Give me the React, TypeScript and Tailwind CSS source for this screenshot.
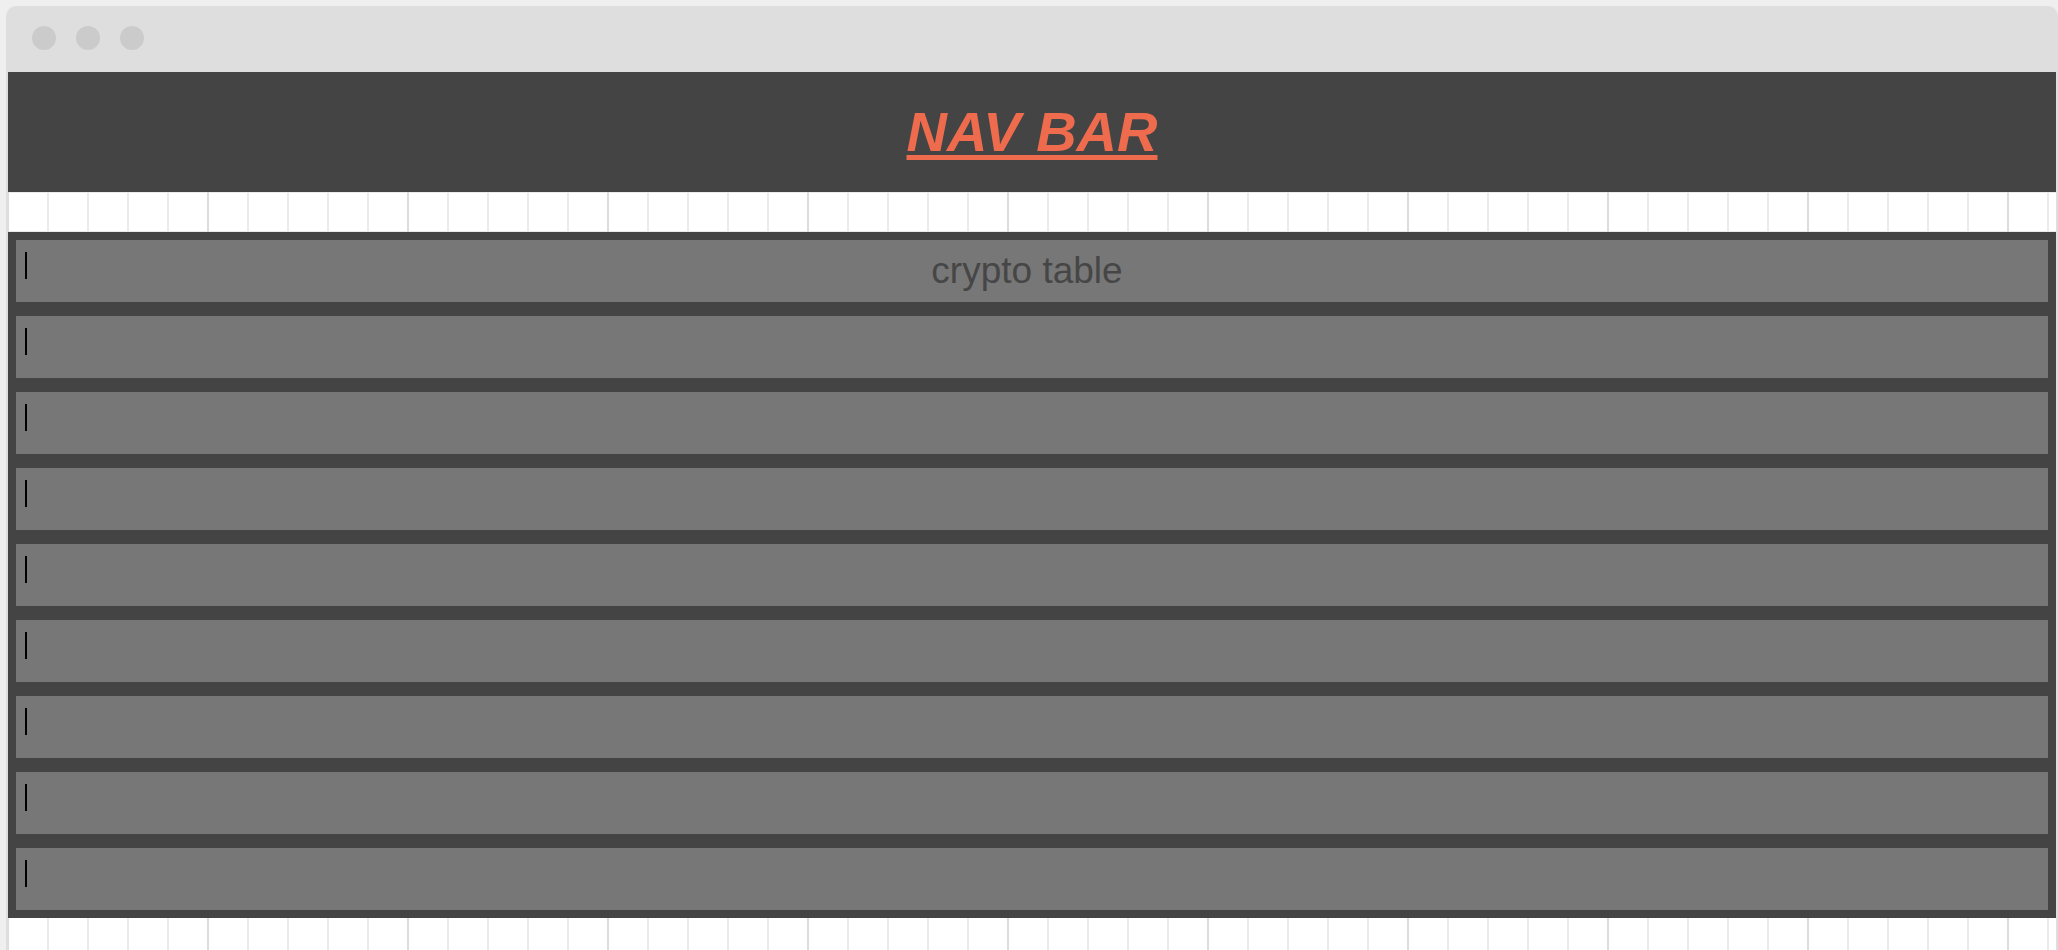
import React from 'react';

const ROWS = 9;

const App: React.FC = () => {
  const rows = Array.from({ length: ROWS }, (_, i) => i);

  return (
    <div className="min-h-screen bg-[#efefef] pl-[6px] pt-[6px] font-['Liberation_Sans',Arial,sans-serif]">
      {/* Browser window */}
      <div className="rounded-t-[10px] bg-[#dedede] px-[2px]">
        {/* Title bar */}
        <div className="flex h-[66px] items-start gap-[20px] pl-[24px] pt-[20px]">
          <span className="h-[24px] w-[24px] rounded-full bg-[#cbcbcb]" />
          <span className="h-[24px] w-[24px] rounded-full bg-[#cbcbcb]" />
          <span className="h-[24px] w-[24px] rounded-full bg-[#cbcbcb]" />
        </div>

        {/* Nav bar */}
        <nav className="flex h-[120px] items-center justify-center bg-[#444444]">
          <a
            href="#"
            className="text-[56px] font-bold italic text-[#ee6c4d] underline decoration-[5px] underline-offset-[4px]"
          >
            NAV BAR
          </a>
        </nav>

        {/* Page with grid background */}
        <main className="bg-white bg-[image:linear-gradient(to_right,#dcdcdc_2px,transparent_2px),linear-gradient(to_right,#ebebeb_2px,transparent_2px),linear-gradient(to_bottom,#ebebeb_2px,transparent_2px)] bg-size-[200px_100%,40px_100%,100%_40px] bg-position-[199px_0,39px_0,0_39px] pt-[40px] pb-[60px]">
          <div className="flex flex-col gap-[14px] bg-[#444444] p-[8px]">
            {rows.map((i) => (
              <div key={i} className="flex h-[62px] bg-[#777777]">
                <span className="ml-[9px] mt-[12px] h-[27px] w-[2px] bg-black" />
                <div className="flex flex-1 items-center justify-center pr-[21px] text-[37px] text-[#464646]">
                  {i === 0 ? 'crypto table' : ''}
                </div>
              </div>
            ))}
          </div>
        </main>
      </div>
    </div>
  );
};

export default App;
